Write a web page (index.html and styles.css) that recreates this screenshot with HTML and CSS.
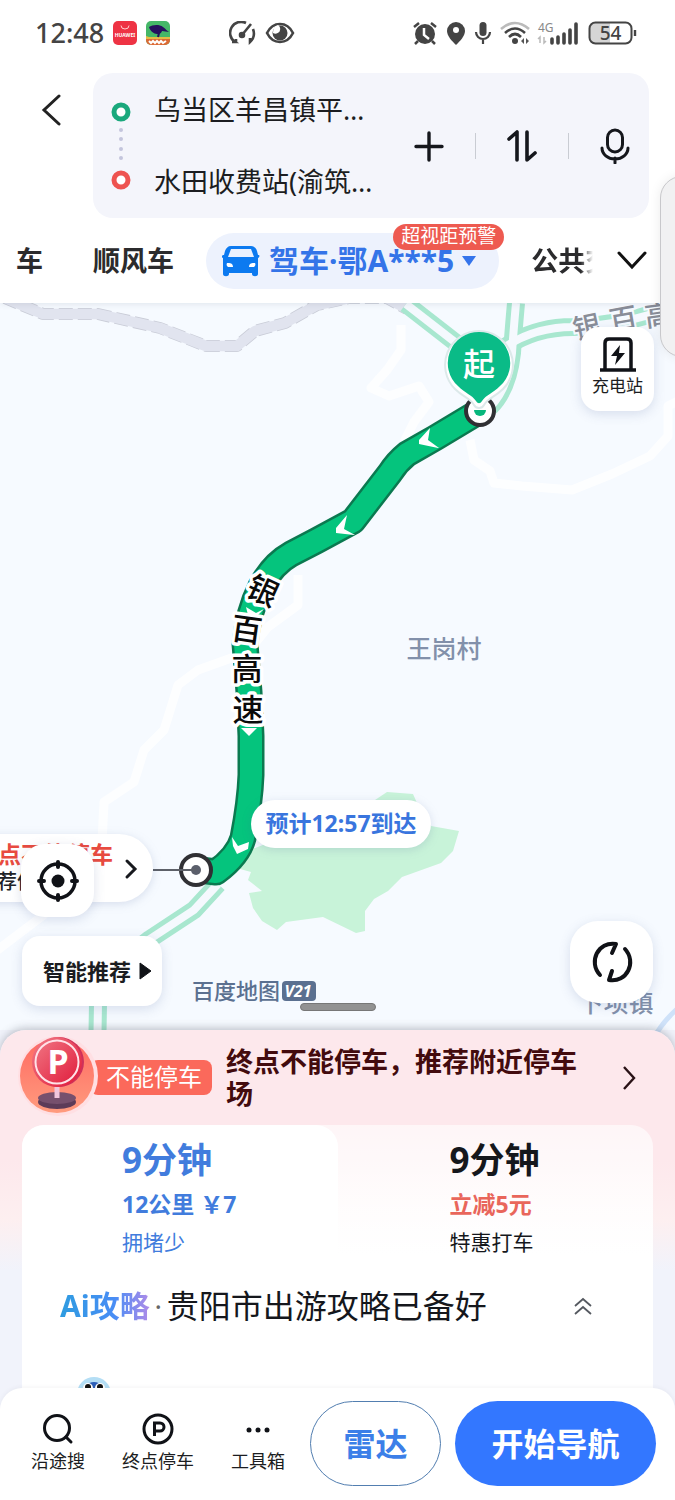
FILE: index.html
```html
<!DOCTYPE html>
<html lang="zh-CN">
<head>
<meta charset="utf-8">
<meta name="viewport" content="width=device-width, initial-scale=1">
<title>驾车路线</title>
<link rel="stylesheet" href="styles.css">
</head>
<body>
<div class="app">
  <header class="top">
    <div class="status">
      <div class="status-group">
        <span class="clock">12:48</span>
        <svg class="app-icon" width="24" height="24" viewBox="0 0 24 24"><rect width="24" height="24" rx="5" fill="#ee3344"/><path d="M8 4.500a4 3.500 0 0 0 8 0" fill="none" stroke="#ffd0d0" stroke-width="1"/><text x="12" y="16" font-size="5" font-weight="700" fill="#fff" text-anchor="middle">HUAWEI</text></svg>
        <svg class="app-icon" width="24" height="24" viewBox="0 0 24 24"><rect width="24" height="24" rx="5" fill="#45b768"/><path d="M0 16h24v3a5 5 0 0 1-5 5H5a5 5 0 0 1-5-5z" fill="#dc6a35"/><path d="M0 15l3 1h21v2H0z" fill="#e3bd45"/><path d="M3 6c3-2 10-3 14 0 3 2 4 4 6 5l-7-1c-1 3-3 3-5 3-3 0-7-3-8-7z" fill="#26105e"/><path d="M13 12l-1 4" stroke="#26105e" stroke-width="2"/><path d="M3 20l2 2 2-2 2 2 2-2 2 2 2-2 2 2 3-2" fill="none" stroke="#fff" stroke-width="2"/></svg>
      </div>
      <div class="status-group status-mid">
        <svg width="27" height="24" viewBox="0 0 27 24" fill="none" stroke="#444" stroke-width="2.600"><path d="M7 22v-4M3 21l3 0A11 11 0 0 1 17 2"/><path d="M24 8a12 12 0 0 1-3 13v-4"/><circle cx="13" cy="14" r="2" fill="#444"/><path d="M13 14l9-11"/></svg>
        <svg width="30" height="24" viewBox="0 0 30 24"><path d="M2 12C8 0 22 0 28 12 22 24 8 24 2 12z" fill="none" stroke="#444" stroke-width="2.600"/><circle cx="15" cy="12" r="7.500" fill="#444"/><path d="M13 4a4.500 4.500 0 1 1-5 8 8 8 0 0 1 5-8z" fill="#fff"/></svg>
      </div>
      <div class="status-group status-right">
        <svg width="26" height="24" viewBox="0 0 26 24"><circle cx="13" cy="13" r="10" fill="#444"/><path d="M6 20l-3 3M20 20l3 3M2 6l5-4M24 6l-5-4" stroke="#444" stroke-width="2.500"/><path d="M12 7v7l5 4" fill="none" stroke="#fff" stroke-width="2.500"/></svg>
        <svg width="20" height="24" viewBox="0 0 20 24"><path d="M10 1a9 9 0 0 1 9 9c0 5-5 10-9 14-4-4-9-9-9-14a9 9 0 0 1 9-9z" fill="#444"/><circle cx="10" cy="9" r="3" fill="#fff"/></svg>
        <svg width="18" height="24" viewBox="0 0 18 24"><rect x="5.500" y="1" width="7" height="14" rx="3.500" fill="#444"/><path d="M2 11a7 7 0 0 0 14 0M9 18v5" fill="none" stroke="#444" stroke-width="2.200"/></svg>
        <svg class="wifi" width="30" height="24" viewBox="0 0 30 24" fill="none" stroke-width="2.600"><path d="M1 8q14-12 28 0" stroke="#bbb"/><path d="M5 12q10-9 20 0M9 16q6-6 12 0" stroke="#444"/><circle cx="15" cy="20" r="3" fill="#444"/><path d="M21 20l3-3v6zM29 20l-3-3v6z" fill="#555"/></svg>
        <svg class="signal" width="42" height="24" viewBox="0 0 42 24"><text x="0" y="11" font-size="12" fill="#888">4G</text><path d="M2 22v-6l-2 2M6 16v6l2-2" fill="none" stroke="#bbb" stroke-width="1.500"/><path d="M14 18v4M20 16v6M26 13v9M32 9v13M38 3v19" stroke="#444" stroke-width="3.600" stroke-linecap="round"/></svg>
        <svg class="battery" width="49" height="24" viewBox="0 0 49 24"><path d="M7 1.500h15v21H7a5 5 0 0 1-5-5v-11a5 5 0 0 1 5-5z" fill="#d5d5d5"/><rect x="1.500" y="1.500" width="42" height="21" rx="6" fill="none" stroke="#444" stroke-width="2"/><path d="M47 9v6" stroke="#444" stroke-width="2.400"/><text x="22.500" y="19" font-size="19" font-weight="500" fill="#444" text-anchor="middle">54</text></svg>
      </div>
    </div>

    <div class="search">
      <button class="icon-btn back" aria-label="返回"><svg width="20" height="32" viewBox="0 0 20 32"><path d="M18 2L3 16l15 14" fill="none" stroke="#222" stroke-width="3" stroke-linecap="round"/></svg></button>
      <div class="route-box">
        <svg class="route-dots" width="20" height="88" viewBox="0 0 20 88"><circle cx="10" cy="10" r="7" fill="#fff" stroke="#1aa87c" stroke-width="5"/><circle cx="10" cy="78" r="7" fill="#fff" stroke="#ee5350" stroke-width="5"/><g fill="#c3c5dc"><circle cx="10" cy="28" r="2"/><circle cx="10" cy="37" r="2"/><circle cx="10" cy="47" r="2"/><circle cx="10" cy="56" r="2"/></g></svg>
        <div class="places"><button class="place">乌当区羊昌镇平…</button><button class="place">水田收费站(渝筑…</button></div>
        <div class="tools">
          <button class="icon-btn" aria-label="添加途经点"><svg width="30" height="34" viewBox="0 0 30 34"><path d="M15 4v27M2 17.500h26" stroke="#15171c" stroke-width="3.400" stroke-linecap="round"/></svg></button>
          <span class="divider"></span>
          <button class="icon-btn" aria-label="交换起终点"><svg width="30" height="34" viewBox="0 0 30 34"><path d="M2 10l8-7v28M20 3v28l8-7" fill="none" stroke="#15171c" stroke-width="3.600" stroke-linecap="round" stroke-linejoin="round"/></svg></button>
          <span class="divider"></span>
          <button class="icon-btn" aria-label="语音输入"><svg width="30" height="36" viewBox="0 0 30 36" fill="none" stroke="#15171c" stroke-width="3" stroke-linecap="round"><rect x="7.500" y="2" width="15" height="22" rx="7.500"/><path d="M2 20a13 11 0 0 0 26 0M15 30v5"/></svg></button>
        </div>
      </div>
    </div>

    <nav class="tabs">
      <a class="tab tab-first" href="#">车</a>
      <a class="tab tab-ride" href="#">顺风车</a>
      <a class="tab tab-active" href="#">
        <svg width="38" height="32" viewBox="0 0 38 32"><path d="M9 1h20c3 0 5 2 6 5l1 4h1c1 1 0 3-1 3v16c0 3-6 3-6 0v-1H7v1c0 3-6 3-6 0V13c-1 0-2-2 0-3h1l1-4c1-3 3-5 6-5z" fill="#0c7af0"/><path d="M9 4h20l3 8H6z" fill="#eaf1fe"/><path d="M5 18c3 0 6 0 6 4H6c-1-1-2-2-1-4zM33 18c-3 0-6 0-6 4h5c1-1 2-2 1-4z" fill="#fff"/></svg>
        <span>驾车·鄂A***5</span>
        <svg class="caret" width="16" height="12" viewBox="0 0 16 12"><path d="M1 1h14L8 11z" fill="#3474eb"/></svg>
        <span class="badge">超视距预警</span>
      </a>
      <a class="tab tab-bus" href="#">公共交</a>
      <button class="icon-btn more" aria-label="更多出行方式"><svg width="32" height="20" viewBox="0 0 32 20"><path d="M3 2l13 14L29 2" fill="none" stroke="#111" stroke-width="3" stroke-linecap="round"/></svg></button>
    </nav>
  </header>

  <main class="map">
    <svg class="map-canvas" viewBox="0 303 675 757" preserveAspectRatio="xMidYMid slice">
      <g fill="none" stroke="#fff" stroke-width="9" stroke-linejoin="round" opacity=".8">
        <path d="M401 325l0 25-14 20-16 18 18 8 30-10 10 16-15 20-10 20"/>
        <path d="M470 440l4 20 16 11 4 12 28 3 50 4 40-16 38-18 18-20 0-30 20-10"/>
        <path d="M298 575v30l-30 22-20 25-50 18-20 15-14 45-20 20-10 32-30 20-2 40"/>
        <path d="M-5 952l50-38"/>
      </g>
      <path d="M5 298l38 16h55l18 4 44 10 46 18h31l18-15 30-8 32-18 32-7h38l20 11" fill="none" stroke="#c9ccd7" stroke-width="12" stroke-linejoin="round" stroke-dasharray="14 5"/>
      <path d="M5 298l38 16h55l18 4 44 10 46 18h31l18-15 30-8 32-18 32-7h38l20 11" fill="none" stroke="#e1e4ef" stroke-width="10.500" stroke-linejoin="round"/>
      <g fill="none" stroke="#a8e7cf" stroke-width="18">
        <path d="M406 304l54 42"/><path d="M516 303q-3 34-4 50-4 36-22 54"/><path d="M505 347q30-20 68-20 55-2 105-22"/>
        <path d="M218 884l-24 26-44 29q-40 30-52 65l-1 56"/>
      </g>
      <g fill="none" stroke="#f5f9fe" stroke-width="8">
        <path d="M406 304l54 42"/><path d="M516 303q-3 34-4 50-4 36-22 54"/><path d="M505 347q30-20 68-20 55-2 105-22"/>
        <path d="M218 884l-24 26-44 29q-40 30-52 65l-1 56"/>
      </g>
      <path d="M685 1002q-22 18-31 36" fill="none" stroke="#cfe2f9" stroke-width="5"/>
      <path d="M245 852l130-52 12-8 26 2 4 9 14 23 28 5-6 20-12 12-39 14-14 14-14 8-9 12v20l-9 2-33-16-37 5-9 8-15-9-9-13-4-15 13-2-14-11 3-8-11-3z" fill="#c8f3d9"/>
      <g class="road-name" text-anchor="middle">
        <text transform="translate(589 337) rotate(-12)">银</text><text transform="translate(625 329) rotate(-10)">百</text><text transform="translate(660 325) rotate(-8)">高</text>
      </g>
      <path class="route-edge" d="M480 411L435 438 407 454Q397 462 390 473L353 521 316 541 291 554Q273 564 261 586 248 612 245 644L249 692 251 736V775Q250 802 243 838 238 856 216 872L200 870"/>
      <path class="route-fill" d="M480 411L435 438 407 454Q397 462 390 473L353 521 316 541 291 554Q273 564 261 586 248 612 245 644L249 692 251 736V775Q250 802 243 838 238 856 216 872L198 870"/>
      <g fill="#fff"><path d="M430 428l-11 12v4l19 4h1l-11-8z"/><path d="M347 515l-11 13v5l18 2h1l-11-6z"/><path d="M246 607l10 6 8-4-14 14z"/><path d="M241 728l8 8 8-8z"/><path d="M232 837l6 9 11-4-1 7-11 5-4-8z"/></g>
      <g class="route-name" text-anchor="middle">
        <text transform="translate(258 601) rotate(25)">银</text><text transform="translate(245 641) rotate(8)">百</text><text x="247" y="680">高</text><text x="248" y="721">速</text>
      </g>
      <circle cx="480" cy="411" r="14" fill="#fff" stroke="#303034" stroke-width="4"/>
      <path d="M479 331a34 34 0 0 1 24 58c-8 8-15 9-19 16-2 4-8 4-10 0-4-7-11-8-19-16a34 34 0 0 1 24-58z" fill="#fff" stroke="#dce9ea" stroke-width="2"/>
      <path d="M474 410a6 6 0 0 0 12 0z" fill="#07b77c"/>
      <path d="M479 332a31 31 0 0 1 21 54c-7 7-14 9-18 15-2 3-4 3-6 0-4-6-11-8-18-15a31 31 0 0 1 21-54z" fill="#0abb87"/>
      <text class="pin-text" x="479" y="376" text-anchor="middle">起</text>
      <text class="town" x="444" y="658" text-anchor="middle">王岗村</text>
      <text class="town" x="616" y="1012" text-anchor="middle">下坝镇</text>
      <g class="bubble"><rect x="251" y="800" width="180" height="48" rx="24"/></g>
      <text class="arrival" x="341" y="832" text-anchor="middle">预计12:57到达</text>
      <path d="M153 870h28" stroke="#5d6068" stroke-width="2"/>
      <circle cx="196" cy="870" r="15" fill="#fff" stroke="#303034" stroke-width="4"/><circle cx="196" cy="870" r="5" fill="#5b5f6b"/><path d="M178 870h18" stroke="#5d6068" stroke-width="2"/>
      <g class="bubble"><rect x="-60" y="834" width="213" height="68" rx="34"/></g>
      <text class="warn" x="113" y="863" text-anchor="end">终点不能停车</text>
      <text class="suggest" x="-23" y="889">推荐停车场</text>
      <path d="M127 861l8 8-8 8" fill="none" stroke="#17191e" stroke-width="3" stroke-linecap="round"/>
      <text class="brand" x="192" y="999">百度地图</text>
      <rect x="282" y="981" width="34" height="20" rx="4" fill="#5b7090"/><text class="brand-tag" x="298" y="997" text-anchor="middle">V21</text>
    </svg>
    <button class="float charge"><svg width="38" height="36" viewBox="0 0 38 36"><path d="M6 33V6q0-4 4-4h18q4 0 4 4v27M1 33h36" fill="none" stroke="#101217" stroke-width="3.500"/><path d="M21 8l-9 11h6l-2 9 10-12h-6z" fill="#101217"/></svg><span>充电站</span></button>
    <button class="float locate" aria-label="定位"><svg width="42" height="42" viewBox="0 0 42 42"><circle cx="21" cy="21" r="17" fill="none" stroke="#101217" stroke-width="3.500"/><circle cx="21" cy="21" r="6.500" fill="#101217"/><path d="M21 2v5M21 35v5M2 21h5M35 21h5" stroke="#101217" stroke-width="4" stroke-linecap="round"/></svg></button>
    <button class="float smart">智能推荐<svg width="13" height="18" viewBox="0 0 13 18"><path d="M1 1v16l11-8z" fill="#101217" stroke="#101217" stroke-linejoin="round"/></svg></button>
    <button class="float refresh" aria-label="刷新"><svg width="44" height="44" viewBox="0 0 44 44" fill="none" stroke="#101217" stroke-width="4" stroke-linecap="round" stroke-linejoin="round"><path d="M10 35C-2 22 8 1 26 4l-4 9"/><path d="M35 9c12 13 2 34-16 31l3-9"/></svg></button>
    <span class="grip"></span>
  </main>

  <section class="sheet">
    <a class="notice" href="#">
      <svg class="sign" width="78" height="80" viewBox="0 0 78 80"><defs><linearGradient id="disc" x2="1" y2="1"><stop stop-color="#f27c88"/><stop offset="1" stop-color="#df1637"/></linearGradient><linearGradient id="base" x2="0" y2="1"><stop stop-color="#ff6a62"/><stop offset="1" stop-color="#ff9b7e"/></linearGradient></defs><circle cx="38" cy="40" r="40" fill="#ffdfe3"/><circle cx="37" cy="40" r="37" fill="url(#base)"/><ellipse cx="37" cy="66" rx="19" ry="7" fill="#5d3b58"/><ellipse cx="37" cy="62" rx="19" ry="6" fill="#77506d"/><path d="M37 48v14" stroke="#f1c6dc" stroke-width="5"/><circle cx="39" cy="26" r="25" fill="#ce315b"/><circle cx="37" cy="26" r="25" fill="url(#disc)"/><circle cx="37" cy="26" r="21.500" fill="none" stroke="#ffe2e8" stroke-width="2"/><text x="38" y="38" font-size="34" font-weight="700" fill="#fff" text-anchor="middle">P</text></svg>
      <span class="tag">不能停车</span>
      <strong class="notice-text">终点不能停车，推荐附近停车场</strong>
      <svg class="notice-arrow" width="14" height="24" viewBox="0 0 14 24"><path d="M2 1l10 11L2 23" fill="none" stroke="#2a1216" stroke-width="2.400"/></svg>
    </a>
    <div class="panel">
      <div class="options">
        <button class="option selected"><span class="time">9分钟</span><span class="price">12公里 ￥7</span><span class="desc">拥堵少</span></button>
        <button class="option taxi"><span class="time">9分钟</span><span class="price">立减5元</span><span class="desc">特惠打车</span></button>
      </div>
      <button class="guide"><span class="ai">Ai攻略</span><span class="sep">·</span><span class="guide-title">贵阳市出游攻略已备好</span><svg width="18" height="18" viewBox="0 0 18 18"><path d="M1 9l8-7 8 7M1 17l8-7 8 7" fill="none" stroke="#555960" stroke-width="1.800"/></svg></button>
      <svg class="mascot" width="36" height="12" viewBox="0 0 36 12"><circle cx="18" cy="17" r="17" fill="#b4def5"/><circle cx="18" cy="17" r="12" fill="#2c5eb8"/><circle cx="12" cy="11" r="5" fill="#fff"/><circle cx="24" cy="11" r="5" fill="#fff"/><circle cx="12" cy="10" r="3" fill="#111"/><circle cx="24" cy="10" r="3" fill="#111"/></svg>
    </div>
  </section>

  <footer class="actions">
    <nav class="quick">
      <button><svg width="32" height="32" viewBox="0 0 32 32"><circle cx="15" cy="15" r="12.500" fill="none" stroke="#101217" stroke-width="3"/><path d="M24 24l5 5" stroke="#101217" stroke-width="3" stroke-linecap="round"/></svg><span>沿途搜</span></button>
      <button><svg width="32" height="32" viewBox="0 0 32 32"><circle cx="16" cy="16" r="14" fill="none" stroke="#101217" stroke-width="3"/><path d="M12.500 23V10H18a4 4 0 0 1 0 8h-5" fill="none" stroke="#101217" stroke-width="3"/></svg><span>终点停车</span></button>
      <button><svg width="32" height="32" viewBox="0 0 32 32" fill="#101217"><circle cx="7" cy="17" r="2.500"/><circle cx="16" cy="17" r="2.500"/><circle cx="25" cy="17" r="2.500"/></svg><span>工具箱</span></button>
    </nav>
    <button class="cta radar">雷达</button>
    <button class="cta start">开始导航</button>
  </footer>
  <span class="edge-handle"></span>
</div>
</body>
</html>
```
FILE: styles.css
```css
* { box-sizing: border-box; }
body { margin: 0; font-family: "Noto Sans", "Noto Sans CJK SC", sans-serif; color: #1c1d21; }
button { margin: 0; padding: 0; border: 0; background: none; font: inherit; color: inherit; cursor: pointer; }
a { color: inherit; text-decoration: none; }
svg { display: block; flex: none; }
.app { position: relative; display: flex; flex-direction: column; min-height: 100vh; overflow: hidden; background: #f1f3fb; }
.top { position: relative; z-index: 2; background: #fff; box-shadow: 0 1px 6px rgba(60, 70, 90, .12); }

.status { display: flex; align-items: center; height: 66px; padding: 0 38px 0 35px; color: #444; }
.status-group { display: flex; align-items: center; gap: 9px; }
.status-mid { margin-left: 59px; }
.status-right { margin-left: auto; gap: 8px; }
.signal { overflow: visible; }
.clock { font-size: 27px; line-height: 32px; font-weight: 500; }
.icon-btn { display: flex; align-items: center; justify-content: center; }

.search { display: flex; align-items: flex-start; padding: 7px 26px 0 0; }
.back { width: 93px; height: 74px; padding-left: 8px; }
.route-box { display: flex; flex: 1; align-items: center; height: 145px; padding: 0 19px 0 18px; border-radius: 20px; background: #f4f5fb; }
.places { display: flex; flex: 1; flex-direction: column; gap: 32px; margin-left: 23px; }
.place { font-size: 27px; line-height: 40px; text-align: left; white-space: nowrap; }
.tools { display: flex; align-items: center; gap: 31px; }
.divider { width: 1px; height: 26px; background: #c9ccd3; }

.tabs { display: flex; align-items: center; height: 85px; padding: 0 27px 0 16px; font-size: 27px; line-height: 40px; font-weight: 700; white-space: nowrap; color: #2b2b2d; }
.tab-ride { margin-left: 50px; }
.tab-active { position: relative; display: flex; align-items: center; gap: 9px; height: 56px; margin-left: 32px; padding: 0 22px 0 16px; border-radius: 28px; background: #edf2fd; color: #3474e8; font-size: 30px; }
.caret { margin-left: -2px; }
.badge { position: absolute; top: -9px; right: -5px; height: 26px; padding: 0 8px; border-radius: 13px; background: #ee5a50; color: #fff; font-size: 19px; line-height: 25px; font-weight: 400; }
.tab-bus { width: 62px; margin-left: 32px; overflow: hidden; -webkit-mask-image: linear-gradient(90deg, #000 80%, transparent); mask-image: linear-gradient(90deg, #000 80%, transparent); }
.more { margin-left: auto; }

.map { position: relative; flex: 1; min-height: 727px; background: #f6faff; }
.map-canvas { position: absolute; top: 0; left: 0; width: 100%; height: calc(100% + 30px); }
.route-edge, .route-fill { fill: none; stroke-linejoin: round; }
.route-edge { stroke: #0b7950; stroke-width: 27px; }
.route-fill { stroke: #05c47d; stroke-width: 22px; }
.road-name { fill: #898d98; font-size: 28px; font-weight: 500; }
.road-name text { paint-order: stroke; stroke: #f6faff; stroke-width: 4px; }
.route-name { fill: #0b0b0b; font-size: 31px; font-weight: 500; }
.route-name text { paint-order: stroke; stroke: #fff; stroke-width: 7px; stroke-linejoin: round; }
.pin-text { fill: #fff; font-size: 32px; font-weight: 500; }
.town { fill: #8290aa; font-size: 25px; font-weight: 500; }
.bubble { fill: #fff; filter: drop-shadow(0 2px 5px rgba(70, 95, 150, .18)); }
.arrival { fill: #3975de; font-size: 23px; font-weight: 700; }
.warn { fill: #e84b40; font-size: 23px; font-weight: 700; }
.suggest { fill: #202126; font-size: 20px; font-weight: 500; }
.brand { fill: #5b7090; font-size: 22px; font-weight: 500; }
.brand-tag { fill: #fff; font-size: 16px; font-weight: 700; font-style: italic; }
.float { position: absolute; display: flex; align-items: center; justify-content: center; background: #fff; box-shadow: 0 3px 12px rgba(70, 95, 150, .18); }
.charge { top: 24px; right: 21px; width: 73px; height: 84px; flex-direction: column; border-radius: 18px; font-size: 17px; line-height: 26px; padding-bottom: 3px; }
.locate { bottom: 113px; left: 21px; width: 73px; height: 73px; border-radius: 24px; }
.smart { bottom: 24px; left: 22px; width: 140px; height: 70px; gap: 8px; padding-left: 11px; border-radius: 18px; font-size: 22px; line-height: 32px; font-weight: 700; }
.refresh { right: 22px; bottom: 27px; width: 83px; height: 82px; border-radius: 28px; }
.grip { position: absolute; bottom: 19px; left: 50%; width: 76px; height: 8px; margin-left: -38px; border: 1px solid #777; border-radius: 4px; background: #929292; }

.sheet { position: relative; display: flex; flex-direction: column; min-height: 380px; padding: 0 22px; overflow: hidden; border-radius: 26px 26px 0 0; background: linear-gradient(#fde8ec 0, #fde8ec 130px, #fdeff0 190px, #f1f3fb 240px); box-shadow: 0 -2px 8px rgba(60, 65, 80, .3); margin-bottom: -22px; }
.notice { display: flex; align-items: center; height: 95px; margin-left: -2px; padding-right: 17px; }
.sign { position: relative; z-index: 1; overflow: visible; margin-top: -4px; }
.tag { height: 35px; margin-left: -8px; padding: 0 10px 0 16px; border-radius: 8px; background: #fb695b; color: #fff; font-size: 24px; line-height: 34px; white-space: nowrap; }
.notice-text { flex: 1; margin-left: 14px; padding-right: 30px; color: #430b0e; font-size: 27px; line-height: 32px; font-weight: 700; }
.panel { flex: 1; border-radius: 22px 22px 0 0; background: linear-gradient(rgba(255, 255, 255, .6), #fff 130px); }
.options { display: grid; grid-template-columns: 1fr 1fr; height: 149px; }
.option { display: flex; flex-direction: column; align-items: flex-start; padding: 11px 0 0 100px; border-radius: 22px 22px 0 0; text-align: left; }
.selected { color: #417cdd; background: #fff; }
.taxi { padding-left: 112px; color: #15171c; }
.time { font-size: 35px; line-height: 48px; font-weight: 700; }
.price { font-size: 23px; line-height: 40px; font-weight: 700; }
.taxi .price { color: #e9665b; }
.desc { font-size: 21px; line-height: 36px; }
.guide { display: flex; align-items: center; width: 100%; height: 64px; padding: 0 61px 0 38px; color: #15171c; }
.ai { font-size: 30px; line-height: 44px; font-weight: 700; background: linear-gradient(90deg, #2e9ce0, #488df5 60%, #b08be8); -webkit-background-clip: text; background-clip: text; color: transparent; }
.sep { width: 17px; text-align: center; font-size: 28px; line-height: 44px; color: #666; }
.guide-title { flex: 1; font-size: 32px; line-height: 44px; text-align: left; white-space: nowrap; }
.mascot { margin: 39px 0 0 54px; }

.actions { position: relative; display: flex; align-items: center; gap: 14px; padding: 13px 19px 14px 8px; border-radius: 22px 22px 0 0; background: #fff; box-shadow: 0 -1px 4px rgba(60, 70, 90, .06); }
.quick { display: grid; grid-template-columns: repeat(3, 1fr); flex: 1; margin-right: -12px; }
.quick button { display: flex; flex-direction: column; align-items: center; gap: 3px; font-size: 18px; line-height: 26px; white-space: nowrap; }
.cta { height: 85px; border-radius: 43px; font-size: 32px; line-height: 44px; font-weight: 700; }
.radar { width: 131px; border: 1px solid #527eb0; color: #3c7fe8; }
.start { width: 201px; background: #3377ff; color: #fff; }
.edge-handle { position: absolute; z-index: 3; top: 176px; right: -30px; width: 45px; height: 181px; border: 1px solid #c8c8cb; border-radius: 22px; background: #f1f1f2; box-shadow: 0 0 12px rgba(0, 0, 0, .08); }
```
